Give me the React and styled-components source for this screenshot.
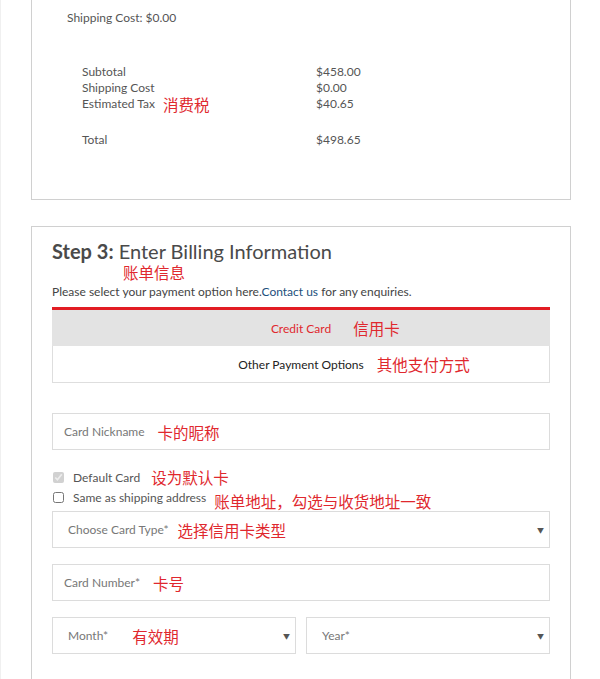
import React from 'react'
import styled, { createGlobalStyle } from 'styled-components'

const Global = createGlobalStyle`
  body {
    margin: 0;
    background: #fff;
    font-family: Lato, "Noto Sans CJK SC", sans-serif;
    color: #555;
  }
`

const Page = styled.div`
  width: 600px;
  height: 679px;
  overflow: hidden;
  box-sizing: border-box;
  border-left: 1px solid #f0f0f0;
  padding: 0 29px 0 30px;
`

const Card = styled.div`
  border: 1px solid #d0d0d0;
  border-top: ${p => (p.open ? 'none' : '1px solid #d0d0d0')};
  box-sizing: border-box;
`

const Summary = styled(Card)`
  height: 200px;
  padding: 10px 0 0 35px;
`

const Line = styled.div`
  font-size: 12px;
  line-height: 16px;
  color: #555;
`

const Table = styled.div`
  margin: 38px 0 0 15px;
  display: grid;
  grid-template-columns: 234px auto;
  font-size: 12px;
  line-height: 16px;
  color: #555;
`

const Cell = styled.span`
  display: flex;
  align-items: center;
  height: 16px;
`

const Gap = styled.div`
  grid-column: span 2;
  height: 20px;
`

const Note = styled.span`
  font-family: "Noto Sans CJK SC", sans-serif;
  color: #e0282e;
  font-size: 15.5px;
  line-height: 16px;
  margin-left: ${p => p.gap || 8}px;
  white-space: nowrap;
`

const Billing = styled(Card)`
  margin-top: 26px;
  padding: 11px 20px 0 20px;
  height: 470px;
`

const Title = styled.h2`
  margin: 0;
  font-size: 20px;
  line-height: 26px;
  font-weight: 400;
  color: #4a4a4a;
  b { font-weight: 700; }
`

const TitleNote = styled.div`
  padding-left: 63px;
  height: 16px;
  line-height: 16px;
`

const Hint = styled.p`
  margin: 3px 0 0;
  font-size: 12px;
  line-height: 18px;
  color: #444;
  a { color: #1c4f7c; text-decoration: none; }
`

const Tabs = styled.div`
  margin-top: 6px;
  border-top: 3px solid #e21d23;
`

const Tab = styled.div`
  height: 36px;
  display: flex;
  align-items: center;
  justify-content: center;
  font-size: 12px;
  background: ${p => (p.active ? '#e3e3e3' : '#fff')};
  color: ${p => (p.active ? '#e0282e' : '#222')};
  border: ${p => (p.active ? 'none' : '1px solid #dedede')};
  border-top: none;
`

const Label = styled.span`
  position: relative;
`

const Aside = styled(Note)`
  position: absolute;
  left: 100%;
  top: 50%;
  transform: translateY(-50%);
`

const Field = styled.div`
  margin-top: ${p => p.top}px;
  height: 37px;
  box-sizing: border-box;
  border: 1px solid #dcdcdc;
  display: flex;
  align-items: center;
  padding: 0 5px 0 ${p => p.pad || 11}px;
  font-size: 12px;
  color: #777;
`

const Arrow = styled.span`
  margin-left: auto;
  font-size: 7px;
  color: #555;
`

const Check = styled.label`
  display: flex;
  align-items: center;
  height: 20px;
  margin-top: ${p => p.top || 0}px;
  font-size: 12px;
  color: #555;
  input {
    margin: 0 9px 0 1px;
    width: 11px;
    height: 11px;
    accent-color: #bbb;
  }
`

const Row = styled.div`
  display: flex;
  gap: 10px;
  margin-top: 16px;
  & > div { flex: 1; margin-top: 0; }
`

export default function App() {
  return (
    <Page>
      <Global />
      <Summary open>
        <Line>Shipping Cost: $0.00</Line>
        <Table>
          <Cell>Subtotal</Cell><Cell>$458.00</Cell>
          <Cell>Shipping Cost</Cell><Cell>$0.00</Cell>
          <Cell>Estimated Tax<Note>消费税</Note></Cell><Cell>$40.65</Cell>
          <Gap />
          <Cell>Total</Cell><Cell>$498.65</Cell>
        </Table>
      </Summary>

      <Billing>
        <Title><b>Step 3:</b> Enter Billing Information</Title>
        <TitleNote><Note gap={0}>账单信息</Note></TitleNote>
        <Hint>Please select your payment option here.<a href="#">Contact us</a> for any enquiries.</Hint>
        <Tabs>
          <Tab active><Label>Credit Card<Aside gap={22}>信用卡</Aside></Label></Tab>
          <Tab><Label>Other Payment Options<Aside gap={13}>其他支付方式</Aside></Label></Tab>
        </Tabs>

        <Field top={30}>Card Nickname<Note gap={13}>卡的昵称</Note></Field>

        <Check top={17}><input type="checkbox" defaultChecked disabled />Default Card<Note gap={11}>设为默认卡</Note></Check>
        <Check><input type="checkbox" />Same as shipping address<Note gap={8} style={{ marginTop: 8 }}>账单地址，勾选与收货地址一致</Note></Check>

        <Field top={4} pad={15}>Choose Card Type*<Note gap={9}>选择信用卡类型</Note><Arrow>▼</Arrow></Field>
        <Field top={16}>Card Number*<Note gap={13}>卡号</Note></Field>
        <Row>
          <Field pad={15}>Month*<Note gap={24}>有效期</Note><Arrow>▼</Arrow></Field>
          <Field pad={15}>Year*<Arrow>▼</Arrow></Field>
        </Row>
      </Billing>
    </Page>
  )
}
